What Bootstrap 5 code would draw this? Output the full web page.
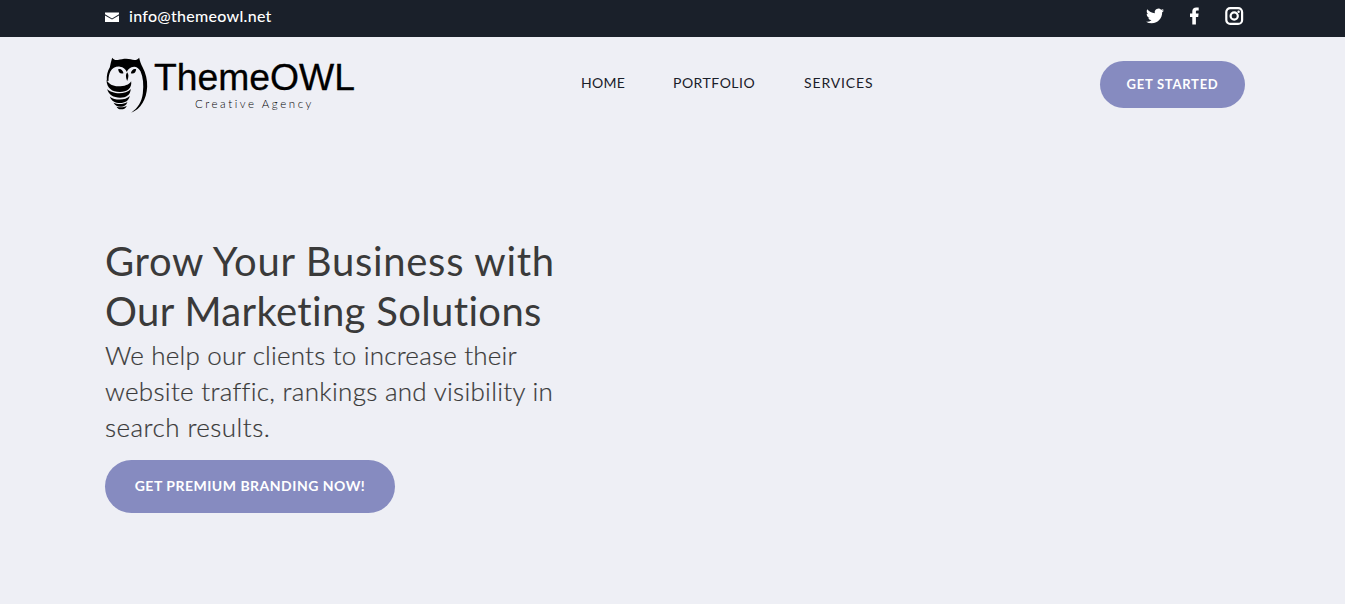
<!DOCTYPE html>
<html lang="en">
<head>
<meta charset="utf-8">
<meta name="viewport" content="width=device-width, initial-scale=1">
<title>ThemeOWL Creative Agency</title>
<link href="https://cdn.jsdelivr.net/npm/bootstrap@5.3.0/dist/css/bootstrap.min.css" rel="stylesheet">
<style>
body{font-family:Lato,"Open Sans",sans-serif;background:#eeeff5;color:#3a3a3a;height:604px;overflow:hidden}
.wrap{width:1140px;margin-left:105px}
.topbar{background:#1a202a;height:37px}
.topbar .wrap{height:32px}
.mail{font-size:16px;letter-spacing:.28px;line-height:20px;font-weight:500}
.social{gap:26px}
.site-head{height:94px}
.menu{margin-left:221px;padding-bottom:2px}
.menu a{font-size:14px;color:#1a202a;line-height:20px}
.nav-home{width:92px;letter-spacing:.3px}
.nav-portfolio{width:131px;letter-spacing:.5px}
.nav-services{letter-spacing:.85px}
.pill{background:#868bc0;color:#fff;font-weight:700;border-radius:30px;border:0;padding:0;white-space:nowrap}
.pill:hover{background:#747ab3;color:#fff}
.pill-sm{width:145px;height:47px;font-size:13px;line-height:47px;letter-spacing:.75px}
.pill-lg{width:290px;height:53px;font-size:14px;line-height:51px;letter-spacing:.5px}
.hero{padding-top:105px}
.hero h1{font-size:40px;line-height:50px;font-weight:400;white-space:nowrap;letter-spacing:.7px}
.hero h1 .second{letter-spacing:.35px}
.hero p{font-size:26px;line-height:36px;font-weight:300;white-space:nowrap;padding-top:1px;margin-bottom:15px;letter-spacing:.2px;-webkit-text-stroke:.2px #3a3a3a}
.hero p .second{letter-spacing:.29px}
.hero p .third{letter-spacing:.45px}
</style>
</head>
<body>
<div class="topbar">
  <div class="wrap d-flex align-items-center justify-content-between">
    <a href="#" class="mail text-white text-decoration-none d-flex align-items-center">
      <svg class="me-2 mt-1" width="16" height="12" viewBox="0 0 16 12"><path fill="#fff" d="M0 .5h14v1.800L7 6.500 0 2.300zM0 3.500l7 4.100 7-4.100V10H0z"/></svg><span>info@themeowl.net</span>
    </a>
    <div class="social d-flex align-items-center">
      <svg width="18" height="18" viewBox="0 0 24 24"><path fill="#fff" d="M23.950 4.570a10 10 0 0 1-2.820.770 4.960 4.960 0 0 0 2.160-2.720c-.950.550-2 .950-3.130 1.180a4.920 4.920 0 0 0-8.380 4.480C7.690 8.090 4.070 6.130 1.640 3.160a4.820 4.820 0 0 0-.670 2.480c0 1.710.870 3.210 2.190 4.100a4.900 4.900 0 0 1-2.230-.620v.060a4.920 4.920 0 0 0 3.950 4.830 5 5 0 0 1-2.210.080 4.940 4.940 0 0 0 4.600 3.420A9.870 9.870 0 0 1 0 19.540a14 14 0 0 0 7.550 2.210c9.050 0 14-7.500 14-13.980 0-.210 0-.420-.020-.630a9.940 9.940 0 0 0 2.460-2.550z"/></svg>
      <svg width="9" height="18" viewBox="0 0 9 18"><path fill="#fff" d="M2.300 17.500V9.900H0V6.500h2.300V4.300C2.300 1.800 3.800.5 6.200.5c1 0 2 .1 2.500.1v3H7.200c-1.100 0-1.300.6-1.300 1.400v1.500h2.700L8.200 9.900H5.900v7.600z"/></svg>
      <svg width="20" height="18" viewBox="0 0 20 18" fill="none" stroke="#fff" stroke-width="2.200"><rect x="1.300" y="1.100" width="15.800" height="15.800" rx="4"/><circle cx="9.200" cy="9" r="3.600"/><circle cx="13.600" cy="4.700" r="1.200" fill="#fff" stroke="none"/></svg>
    </div>
  </div>
</div>
<header class="wrap site-head d-flex align-items-center">
  <a href="#" class="d-block"><svg class="d-block" width="255" height="66" viewBox="105 51 255 66" aria-label="ThemeOWL">
    <g transform="translate(99.500 50.300) scale(.3333)">
      <path d="M38 22c4 6 10 8 17 7 9-2 16-4 25-4 11 0 17 3 25 4 6 0 10-2 14-7 2 11 6 19 10 28 10 19 15 39 14 59-2 38-19 67-48 78 20-13 32-33 35-58 3-26 1-48-7-66-6-12-17-17-27-12-6 3-11 7-14 14-4-9-10-15-21-16-12-1-23 4-28 14-4 8-6 17-6 29l-5-1c-1-16 2-28 9-40 2-10 4-20 7-29z"/>
      <path d="M56 57c7-3 14 2 16 12-9 3-15-2-16-12zM110 57c-7-3-14 2-16 12 9 3 15-2 16-12zM83 66c5 6 5 14 0 26-5-12-5-20 0-26z"/>
      <path d="M21 89c8 13 18 18 35 19 19 0 33-4 39-15 3 21-12 32-34 32-23 0-39-11-40-36zM23 116c13 15 54 19 71 0-2 18-13 26-32 26-20 0-35-9-39-26zM31 139c14 11 46 13 60-2-4 15-15 21-29 21-15 0-26-6-31-19zM42 157c12 6 29 6 42-2-4 10-10 14-20 14-11 0-17-4-22-12zM51 169c10 3 21 3 31-2-5 8-9 10-17 10-7 0-11-3-14-8z"/>
    </g>
    <text x="154" y="90" font-family="Liberation Sans, sans-serif" font-size="37" textLength="201" lengthAdjust="spacingAndGlyphs" stroke="#000" stroke-width=".3">ThemeOWL</text>
    <text x="195" y="107.500" font-family="Lato, sans-serif" font-weight="300" font-size="11.500" letter-spacing="2.550" style="font-variant-ligatures:none">Creative Agency</text>
  </svg></a>
  <nav class="menu d-flex">
    <a class="text-decoration-none nav-home" href="#">HOME</a>
    <a class="text-decoration-none nav-portfolio" href="#">PORTFOLIO</a>
    <a class="text-decoration-none nav-services" href="#">SERVICES</a>
  </nav>
  <a href="#" class="btn pill pill-sm ms-auto">GET STARTED</a>
</header>
<main class="wrap hero">
  <h1 class="mb-0"><span class="d-block">Grow Your Business with</span><span class="d-block second">Our Marketing Solutions</span></h1>
  <p><span class="d-block">We help our clients to increase their</span><span class="d-block second">website traffic, rankings and visibility in</span><span class="d-block third">search results.</span></p>
  <a href="#" class="btn pill pill-lg">GET PREMIUM BRANDING NOW!</a>
</main>
<script src="https://cdn.jsdelivr.net/npm/bootstrap@5.3.0/dist/js/bootstrap.bundle.min.js"></script>
</body>
</html>
